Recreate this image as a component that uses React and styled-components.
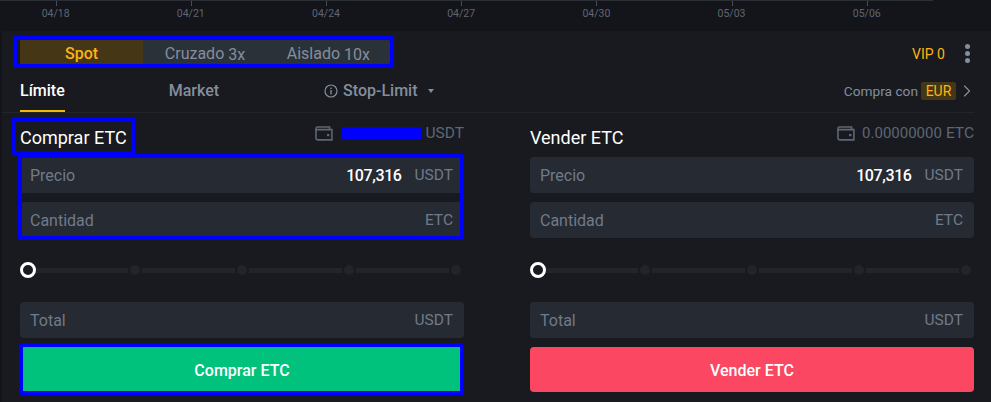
import styled, { createGlobalStyle } from "styled-components";
import { ChevronRight } from "lucide-react";

const dates = ["04/18", "04/21", "04/24", "04/27", "04/30", "05/03", "05/06"];

const GlobalStyle = createGlobalStyle`
  html, body {
    margin: 0;
    padding: 0;
    width: 991px;
    height: 402px;
    overflow: hidden;
    background: #14151a;
    font-family: Roboto, "Liberation Sans", sans-serif;
  }
`;

function WalletIcon() {
  return (
    <svg width="18" height="15" viewBox="0 0 18 15" fill="none">
      <path d="M1 4.5V2.6C1 1.7 1.7 1 2.6 1H14.5V3.5" stroke="#5e6673" strokeWidth="1.6" />
      <path d="M1 3.6H16.9V13.9H2.6C1.7 13.9 1 13.2 1 12.3V3.6Z" stroke="#5e6673" strokeWidth="1.6" />
      <rect x="12" y="8" width="2.4" height="2.2" fill="#5e6673" />
    </svg>
  );
}

function InfoIcon() {
  return (
    <svg width="14" height="14" viewBox="0 0 14 14" fill="none">
      <circle cx="7" cy="7" r="6" stroke="#848e9c" strokeWidth="1.2" />
      <rect x="6.3" y="6" width="1.4" height="4.4" fill="#848e9c" />
      <rect x="6.3" y="3.6" width="1.4" height="1.5" fill="#848e9c" />
    </svg>
  );
}

function OrderForm({ side, balance, unit, redacted }) {
  const buy = side === "Comprar";
  const title = `${side} ETC`;
  return (
    <Column>
      <FormHead>
        {buy ? (
          <Highlight $inset="-9px -8px -5px -8px">
            <FormTitle>{title}</FormTitle>
          </Highlight>
        ) : (
          <FormTitle>{title}</FormTitle>
        )}
        <Balance>
          <WalletIcon />
          {redacted ? <Redacted /> : <BalanceValue>{balance}</BalanceValue>}
          <span>{unit}</span>
        </Balance>
      </FormHead>
      {buy ? (
        <Highlight $inset="-3px 0 -2px -2px">
          <InputStack>
            <PriceField />
            <AmountField />
          </InputStack>
        </Highlight>
      ) : (
        <InputStack>
          <PriceField />
          <AmountField />
        </InputStack>
      )}
      <Slider>
        <Thumb />
        <Track />
        <Dot />
        <Track />
        <Dot />
        <Track />
        <Dot />
        <Track />
        <Dot />
      </Slider>
      <Field>
        <FieldLabel>Total</FieldLabel>
        <FieldUnit>USDT</FieldUnit>
      </Field>
      {buy ? (
        <Highlight $inset="5px 0 -3px -1px">
          <SubmitButton $color="#00c27c">{title}</SubmitButton>
        </Highlight>
      ) : (
        <SubmitButton $color="#fb4762">{title}</SubmitButton>
      )}
    </Column>
  );
}

function PriceField() {
  return (
    <Field>
      <FieldLabel>Precio</FieldLabel>
      <FieldValue>107,316</FieldValue>
      <FieldUnit>USDT</FieldUnit>
    </Field>
  );
}

function AmountField() {
  return (
    <Field>
      <FieldLabel>Cantidad</FieldLabel>
      <FieldUnit>ETC</FieldUnit>
    </Field>
  );
}

export default function App() {
  return (
    <Page>
      <GlobalStyle />
      <ChartAxis>
        {dates.map((d) => (
          <Tick key={d}>{d}</Tick>
        ))}
      </ChartAxis>
      <Panel>
        <TopRow>
          <Highlight $inset="-4px -4px -4px -7px">
            <MarginTabs>
              <MarginTab $active>Spot</MarginTab>
              <MarginTab>
                Cruzado <small>3x</small>
              </MarginTab>
              <MarginTab>
                Aislado <small>10x</small>
              </MarginTab>
            </MarginTabs>
          </Highlight>
          <VipBox>
            <Vip>VIP 0</Vip>
            <MoreDots>
              <i />
              <i />
              <i />
            </MoreDots>
          </VipBox>
        </TopRow>
        <OrderTabs>
          <OrderTab $active>Límite</OrderTab>
          <OrderTab $left="104px">Market</OrderTab>
          <StopLimit>
            <InfoIcon />
            <span>Stop-Limit</span>
            <Caret />
          </StopLimit>
          <BuyWith>
            Compra con<Currency>EUR</Currency>
            <ChevronRight size={20} color="#848e9c" strokeWidth={1.4} />
          </BuyWith>
        </OrderTabs>
        <Forms>
          <OrderForm side="Comprar" unit="USDT" redacted />
          <OrderForm side="Vender" unit="ETC" balance="0.00000000" />
        </Forms>
      </Panel>
    </Page>
  );
}

const Page = styled.div`
  width: 991px;
  height: 402px;
  overflow: hidden;
  background: #14151a;
`;

const ChartAxis = styled.div`
  height: 31px;
  box-sizing: border-box;
  margin-left: -12px;
  width: 945px;
  display: flex;
  border-top: 1px solid #2b2f36;
  background: #14151a;
`;

const Tick = styled.div`
  width: 135.2px;
  flex: none;
  text-align: center;
  font-size: 10.5px;
  line-height: 12px;
  padding-top: 7px;
  color: #5e6673;
  position: relative;

  &::before {
    content: "";
    position: absolute;
    top: 0;
    left: 50%;
    width: 1px;
    height: 5px;
    background: #474d57;
  }
`;

const Panel = styled.div`
  height: 371px;
  margin-left: 2px;
  padding: 9px 17px 0 18px;
  background: #181a20;
`;

const TopRow = styled.div`
  height: 24px;
  display: flex;
  justify-content: space-between;
  align-items: center;
`;

const Highlight = styled.div`
  position: relative;

  &::after {
    content: "";
    position: absolute;
    inset: ${(p) => p.$inset};
    border: 4px solid #0000ff;
    border-radius: 2px;
    pointer-events: none;
  }
`;

const MarginTabs = styled.div`
  width: 370px;
  height: 24px;
  display: flex;
  background: #2b3139;
  border-radius: 2px;
`;

const MarginTab = styled.div`
  flex: 1;
  height: 24px;
  text-align: center;
  font-size: 16px;
  line-height: 27px;
  font-weight: ${(p) => (p.$active ? 500 : 400)};
  color: ${(p) => (p.$active ? "#fcb414" : "#848e9c")};
  background: ${(p) => (p.$active ? "#453616" : "transparent")};

  small {
    font-size: 16px;
    vertical-align: -1px;
  }
`;

const VipBox = styled.div`
  display: flex;
  align-items: center;
  gap: 20px;
  margin-top: 3px;
  padding-right: 4px;
`;

const Vip = styled.span`
  font-size: 14px;
  color: #fcb414;
`;

const MoreDots = styled.span`
  display: flex;
  flex-direction: column;
  gap: 2px;

  i {
    width: 5px;
    height: 5px;
    border-radius: 50%;
    background: #848e9c;
  }
`;

const OrderTabs = styled.div`
  margin-top: 5px;
  height: 43px;
  margin-left: -18px;
  padding-left: 18px;
  display: flex;
  align-items: center;
  border-bottom: 1px solid #21242b;
`;

const OrderTab = styled.div`
  height: 40px;
  line-height: 42px;
  margin-left: ${(p) => p.$left || 0};
  font-size: 16px;
  font-weight: 500;
  color: ${(p) => (p.$active ? "#ffffff" : "#848e9c")};
  border-bottom: 2px solid ${(p) => (p.$active ? "#f0b90b" : "transparent")};
`;

const StopLimit = styled.div`
  margin-left: 105px;
  display: flex;
  align-items: center;
  gap: 5px;
  font-size: 16px;
  font-weight: 500;
  color: #848e9c;
`;

const Caret = styled.i`
  margin-left: 5px;
  width: 0;
  height: 0;
  border: 3.5px solid transparent;
  border-top: 4px solid #848e9c;
  border-bottom: 0;
`;

const BuyWith = styled.div`
  margin-left: auto;
  margin-right: -3px;
  display: flex;
  align-items: center;
  font-size: 13.7px;
  color: #848e9c;
`;

const Currency = styled.span`
  margin: 0 1px 0 3px;
  width: 35px;
  height: 18px;
  line-height: 18px;
  text-align: center;
  border-radius: 2px;
  font-size: 14px;
  color: #fcb414;
  background: #453616;
`;

const Forms = styled.div`
  display: grid;
  grid-template-columns: 444px 444px;
  justify-content: space-between;
`;

const Column = styled.div`
  display: flex;
  flex-direction: column;
`;

const FormHead = styled.div`
  height: 44px;
  display: flex;
  justify-content: space-between;
  align-items: center;
  padding-top: 6px;
  box-sizing: border-box;
`;

const FormTitle = styled.div`
  font-size: 18px;
  font-weight: 400;
  line-height: 24px;
  color: #ffffff;
`;

const Balance = styled.div`
  display: flex;
  align-items: center;
  gap: 4px;
  margin-top: -10px;
  font-size: 15.5px;
  color: #5e6673;

  svg {
    margin-right: 5px;
  }
`;

const BalanceValue = styled.span`
  margin-left: -2px;
  font-size: 15px;
`;

const Redacted = styled.span`
  width: 80px;
  height: 12px;
  background: #0000ff;
  border-radius: 1px;
`;

const InputStack = styled.div`
  display: flex;
  flex-direction: column;
  gap: 9px;
`;

const Field = styled.div`
  height: 36px;
  padding: 0 11px 0 10px;
  display: flex;
  align-items: center;
  background: #262a32;
  border-radius: 4px;
  font-size: 16px;
`;

const FieldLabel = styled.span`
  margin-right: auto;
  color: #707a8a;
`;

const FieldValue = styled.span`
  margin-right: 13px;
  font-weight: 500;
  letter-spacing: -0.4px;
  color: #ffffff;
`;

const FieldUnit = styled.span`
  font-size: 15.5px;
  color: #707a8a;
`;

const Slider = styled.div`
  height: 64px;
  padding-right: 3px;
  display: flex;
  align-items: center;
  gap: 2px;
`;

const Thumb = styled.i`
  flex: none;
  width: 16px;
  height: 16px;
  margin-right: -3px;
  box-sizing: border-box;
  border: 3.5px solid #ffffff;
  border-radius: 50%;
  background: #181a20;
  z-index: 1;
`;

const Track = styled.i`
  flex: 1;
  height: 5px;
  background: #21242a;
`;

const Dot = styled.i`
  flex: none;
  width: 10px;
  height: 10px;
  border-radius: 50%;
  background: #21242a;
`;

const SubmitButton = styled.div`
  height: 45px;
  margin-top: 9px;
  border-radius: 4px;
  text-align: center;
  line-height: 47px;
  font-size: 16px;
  font-weight: 500;
  color: #ffffff;
  background: ${(p) => p.$color};
`;
